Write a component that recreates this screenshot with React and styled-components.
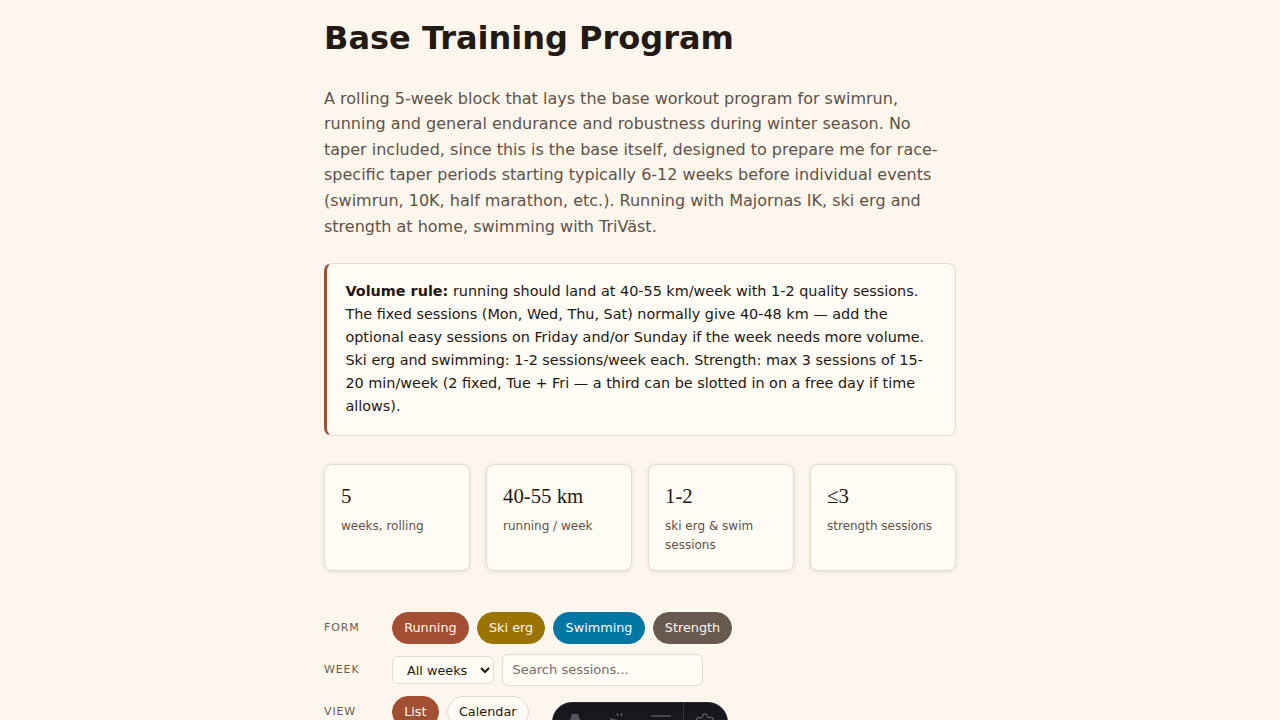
import React from "react";
import styled, { createGlobalStyle } from "styled-components";
import { Settings } from "lucide-react";

const GlobalStyle = createGlobalStyle`
  * { box-sizing: border-box; }
  html, body { margin: 0; padding: 0; }
  body {
    background: #fdf6ec;
    color: #1f1712;
    font-family: "DejaVu Sans", sans-serif;
    line-height: 1.6;
    overflow: hidden;
    height: 720px;
  }
`;

const Page = styled.main`
  width: 632px;
  margin: 0 auto;
  padding-top: 16px;
`;

const Title = styled.h1`
  margin: 0 0 25.6px;
  font-size: 32px;
  line-height: 44px;
  font-weight: 700;
  color: #241a14;
`;

const Intro = styled.p`
  margin: 0 0 23.4px;
  font-size: 16px;
  line-height: 25.6px;
  color: #5f5249;
`;

const Callout = styled.aside`
  background: #fffbf5;
  border: 1px solid #e5dcd2;
  border-left: 3px solid #a34f33;
  border-radius: 8px;
  padding: 16px 18px 17px 18.4px;
  font-size: 14.4px;
  line-height: 23px;
  margin-bottom: 28px;
  color: #1f1712;
`;

const Stats = styled.div`
  display: grid;
  grid-template-columns: repeat(4, 1fr);
  gap: 16px;
  margin-bottom: 41px;
`;

const Stat = styled.div`
  background: #fffbf5;
  border: 1px solid #e5dcd2;
  border-radius: 8px;
  box-shadow: 0 1px 4px rgba(60, 40, 20, 0.12);
  padding: 16px 16px 15px;
`;

const StatValue = styled.div`
  font-family: "Liberation Serif", serif;
  font-size: 20.8px;
  line-height: 30px;
  color: #241a14;
`;

const StatLabel = styled.div`
  font-size: 12px;
  line-height: 19.2px;
  color: #5f5249;
  margin-top: 6px;
`;

const FilterRow = styled.div`
  display: flex;
  align-items: center;
  gap: 8px;
  margin-bottom: 10px;
`;

const FilterLabel = styled.span`
  width: 60px;
  font-size: 11px;
  letter-spacing: 0.88px;
  text-transform: uppercase;
  color: #6b5d53;
`;

const Chip = styled.button`
  height: 32px;
  padding: 0 11.2px;
  border-radius: 16px;
  border: 1px solid ${(p) => p.$color || "#e5dcd2"};
  background: ${(p) => p.$color || "#fffbf5"};
  color: ${(p) => (p.$color ? "#fdf6ec" : "#241a14")};
  font-family: inherit;
  font-size: 12.8px;
  line-height: 1;
`;

const WeekSelect = styled.select`
  height: 28px;
  width: 102px;
  padding: 1px 4px 0 10px;
  background: #fffbf5;
  border: 1px solid #e5dcd2;
  border-radius: 6px;
  font-family: inherit;
  font-size: 12.8px;
  color: #1f1712;
`;

const Search = styled.input`
  width: 201px;
  height: 32px;
  padding: 0 9.6px;
  background: #fffbf5;
  border: 1px solid #e5dcd2;
  border-radius: 6px;
  font-family: inherit;
  font-size: 13px;
  color: #1f1712;
  &::placeholder { color: #7a6d64; opacity: 1; }
`;

const DevBar = styled.div`
  position: fixed;
  left: 552px;
  top: 702px;
  width: 176px;
  height: 40px;
  display: flex;
  background: linear-gradient(180deg, #13151a 0%, #1c1e24 100%);
  border: 1px solid #2a2c33;
  border-radius: 20px;
  overflow: hidden;
`;

const DevSlot = styled.div`
  flex: 1;
  display: flex;
  justify-content: center;
  padding-top: 9px;
  border-left: ${(p) => (p.$divided ? "1px solid #34363d" : "none")};
  color: #55575e;
`;

const forms = [
  ["Running", "#a34f33"],
  ["Ski erg", "#9a7300"],
  ["Swimming", "#0077a3"],
  ["Strength", "#685a50"],
];

const stats = [
  ["5", "weeks, rolling"],
  ["40-55 km", "running / week"],
  ["1-2", "ski erg & swim sessions"],
  ["≤3", "strength sessions"],
];

export default function App() {
  return (
    <>
      <GlobalStyle />
      <Page>
        <Title>Base Training Program</Title>
        <Intro>
          A rolling 5-week block that lays the base workout program for swimrun, running and general
          endurance and robustness during winter season. No taper included, since this is the base
          itself, designed to prepare me for race-specific taper periods starting typically 6-12
          weeks before individual events (swimrun, 10K, half marathon, etc.). Running with Majornas
          IK, ski erg and strength at home, swimming with TriVäst.
        </Intro>
        <Callout>
          <strong>Volume rule:</strong> running should land at 40-55 km/week with 1-2 quality
          sessions. The fixed sessions (Mon, Wed, Thu, Sat) normally give 40-48 km — add the optional
          easy sessions on Friday and/or Sunday if the week needs more volume. Ski erg and swimming:
          1-2 sessions/week each. Strength: max 3 sessions of 15-20 min/week (2 fixed, Tue + Fri — a
          third can be slotted in on a free day if time allows).
        </Callout>
        <Stats>
          {stats.map(([value, label]) => (
            <Stat key={value}>
              <StatValue>{value}</StatValue>
              <StatLabel>{label}</StatLabel>
            </Stat>
          ))}
        </Stats>
        <FilterRow>
          <FilterLabel>Form</FilterLabel>
          {forms.map(([name, color]) => (
            <Chip key={name} $color={color}>{name}</Chip>
          ))}
        </FilterRow>
        <FilterRow>
          <FilterLabel>Week</FilterLabel>
          <WeekSelect defaultValue="all">
            <option value="all">All weeks</option>
          </WeekSelect>
          <Search placeholder="Search sessions..." />
        </FilterRow>
        <FilterRow>
          <FilterLabel>View</FilterLabel>
          <Chip $color="#a34f33">List</Chip>
          <Chip>Calendar</Chip>
        </FilterRow>
      </Page>
      <DevBar>
        <DevSlot>
          <svg width="20" height="20" viewBox="0 0 20 20" fill="currentColor">
            <path d="M7 2h6l4 12-4-2H7l-4 2z" />
          </svg>
        </DevSlot>
        <DevSlot>
          <svg width="20" height="20" viewBox="0 0 20 20" fill="none" stroke="currentColor" strokeWidth="1.6">
            <path d="M3 7l11 3-7 8zM9 1l1 3M14 1l-1 3" />
          </svg>
        </DevSlot>
        <DevSlot>
          <svg width="20" height="20" viewBox="0 0 20 20" fill="none" stroke="currentColor" strokeWidth="1.6">
            <path d="M-1 4h22M-1 10h22M-1 16h22" />
          </svg>
        </DevSlot>
        <DevSlot $divided>
          <Settings size={22} strokeWidth={1.6} />
        </DevSlot>
      </DevBar>
    </>
  );
}
